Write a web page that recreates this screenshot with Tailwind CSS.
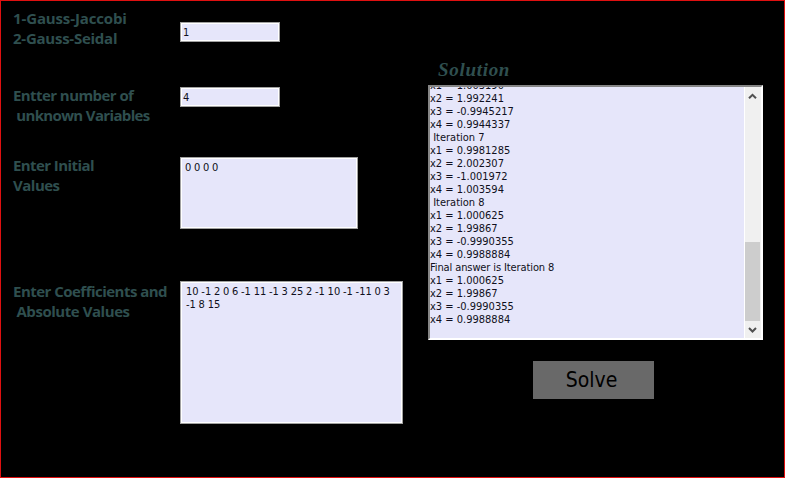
<!DOCTYPE html>
<html lang="en">
<head>
<meta charset="utf-8">
<title>Gauss Solver</title>
<script src="https://cdn.jsdelivr.net/npm/@tailwindcss/browser@4"></script>
</head>
<body class="bg-black">
<main class="flex h-[478px] w-[785px] overflow-hidden border border-[#df1010] bg-black font-['DejaVu_Sans_Condensed','DejaVu_Sans',sans-serif] text-[11px] leading-[13px] text-[#101020]">
  <section class="flex w-[427px] shrink-0 flex-col pl-3 pt-[7px]">
    <div class="flex h-[77px]">
      <label class="w-[167px] shrink-0 whitespace-pre font-['Open_Sans',sans-serif] text-[15px] font-bold leading-5 text-[#2f4f4f]"><span class="tracking-[-0.13px]">1-Gauss-Jaccobi</span>
<span class="tracking-[-0.25px]">2-Gauss-Seidal</span></label>
      <div class="mt-[14px] h-5 w-[100px] border border-[#a0a0a0] bg-[#e6e6fa] pl-[2px] pt-[3px] shadow-[inset_0_0_0_1px_#fff]">1</div>
    </div>
    <div class="flex h-[70px]">
      <label class="w-[167px] shrink-0 whitespace-pre font-['Open_Sans',sans-serif] text-[15px] font-bold leading-5 text-[#2f4f4f]"><span class="tracking-[-0.57px]">Entter number of</span>
<span class="tracking-[-0.65px]"> unknown Variables</span></label>
      <div class="mt-[2px] h-5 w-[100px] border border-[#a0a0a0] bg-[#e6e6fa] pl-[2px] pt-[3px] shadow-[inset_0_0_0_1px_#fff]">4</div>
    </div>
    <div class="flex h-[126px]">
      <label class="w-[167px] shrink-0 whitespace-pre font-['Open_Sans',sans-serif] text-[15px] font-bold leading-5 text-[#2f4f4f]"><span class="tracking-[-0.58px]">Enter Initial</span>
<span class="tracking-[-0.5px]">Values</span></label>
      <div class="mt-[2px] h-[72px] w-[178px] border border-[#a0a0a0] bg-[#e6e6fa] pl-[4px] pt-[3px] shadow-[inset_0_0_0_1px_#fff] [word-spacing:-0.4px]">0 0 0 0</div>
    </div>
    <div class="flex">
      <label class="w-[167px] shrink-0 whitespace-pre font-['Open_Sans',sans-serif] text-[15px] font-bold leading-5 text-[#2f4f4f]"><span class="tracking-[-0.52px]">Enter Coefficients and</span>
<span class="tracking-[-0.45px]"> Absolute Values</span></label>
      <div class="h-[143px] w-[223px] whitespace-pre border border-[#a0a0a0] bg-[#e6e6fa] pl-[5px] pt-[3px] shadow-[inset_0_0_0_1px_#fff] [word-spacing:-0.4px]">10 -1 2 0 6 -1 11 -1 3 25 2 -1 10 -1 -11 0 3
-1 8 15</div>
    </div>
  </section>
  <section class="flex w-[335px] flex-col">
    <h1 class="mt-[58px] h-[26px] pl-[10px] font-['Liberation_Serif',serif] text-[19px] font-bold italic leading-[22px] tracking-[0.7px] text-[#2f4f4f]">Solution</h1>
    <div class="flex h-[255px] border-2 border-b-white border-l-[#858585] border-r-white border-t-[#858585] bg-[#e6e6fa]">
      <div class="flex grow flex-col overflow-hidden whitespace-pre"><div class="-mt-[8px]">x1 = 1.003190
x2 = 1.992241
x3 = -0.9945217
x4 = 0.9944337
 Iteration 7
x1 = 0.9981285
x2 = 2.002307
x3 = -1.001972
x4 = 1.003594
 Iteration 8
x1 = 1.000625
x2 = 1.99867
x3 = -0.9990355
x4 = 0.9988884
<span class="tracking-[-0.11px]">Final answer is Iteration 8</span>
x1 = 1.000625
x2 = 1.99867
x3 = -0.9990355
x4 = 0.9988884</div></div>
      <div class="flex w-[17px] shrink-0 flex-col border-l border-white bg-[#f0f0f0]">
        <svg class="h-[17px] w-[15px]" viewBox="0 0 15 17" fill="none" stroke="#505050" stroke-width="2"><path d="M4 11.3 7.5 7.8 11 11.3"/></svg>
        <div class="mt-[138px] h-[79px] w-[15px] bg-[#cdcdcd]"></div>
        <svg class="h-[17px] w-[15px]" viewBox="0 0 15 17" fill="none" stroke="#505050" stroke-width="2"><path d="M4 7 7.5 10.5 11 7"/></svg>
      </div>
    </div>
    <button class="ml-[105px] mt-[21px] h-[38px] w-[121px] bg-[#696969] pr-[4px] text-[21px] leading-[38px] text-black">Solve</button>
  </section>
</main>
</body>
</html>
